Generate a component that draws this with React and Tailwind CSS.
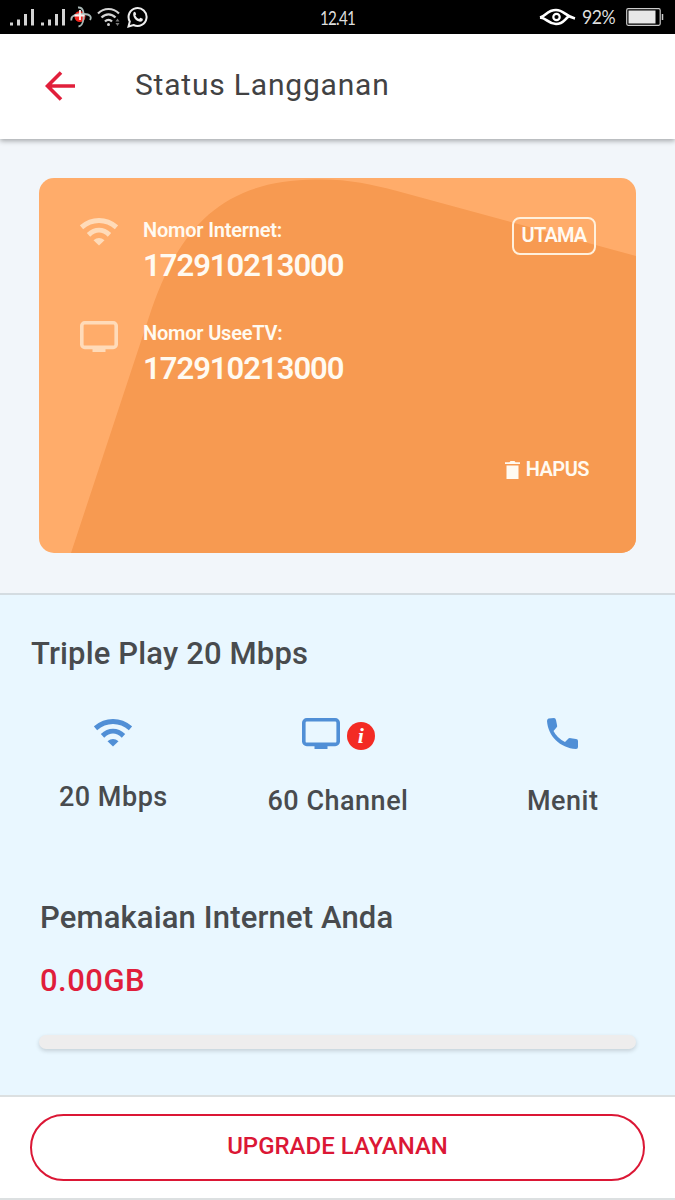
import React from 'react';

const nomor = [
  { label: 'Nomor Internet:', nilai: '172910213000', icono: 'wifi' },
  { label: 'Nomor UseeTV:', nilai: '172910213000', icono: 'tv' },
];

const Wifi = ({ className }) => (
  <svg viewBox="0 0 38 28" className={className} fill="none">
    <path d="M1.500 9.300C12 .3 26 .3 36.500 9.300" stroke="currentColor" strokeWidth="5" />
    <path d="M8.500 16.800C15 10.800 23 10.800 29.500 16.800" stroke="currentColor" strokeWidth="5" />
    <path d="M13.500 22.200Q19 17.600 24.500 22.200L19 27.500Z" fill="currentColor" />
  </svg>
);

const Tv = ({ className }) => (
  <svg viewBox="0 0 38 31" className={className} fill="none">
    <rect x="1.800" y="1.800" width="34.400" height="24.600" rx="3" stroke="currentColor" strokeWidth="3.600" />
    <path d="M12.500 27h13v4h-13z" fill="currentColor" />
  </svg>
);

const Sinyal = () => (
  <svg viewBox="0 0 25 18" className="h-[18px] w-[25px]" fill="#d4d4d4">
    <path d="M0 14.500h3V17.500H0zM7 11.500h3v6H7zM14 6h3v11.500h-3zM21 1h3v16.500h-3z" />
  </svg>
);

const StatusBar = () => (
  <div className="grid h-[34px] grid-cols-3 items-center bg-black text-[#dedede]">
    <div className="flex items-center pl-[10px]">
      <Sinyal />
      <div className="ml-[6px]"><Sinyal /></div>
      <svg viewBox="0 0 22 22" className="ml-[4px] h-[22px] w-[22px]" fill="none">
        <circle cx="10" cy="10.500" r="5.500" fill="#f0271f" />
        <path d="M1.500 14.500C0 9 8 8 14 8c6 0 8 3 6 6" stroke="#a9b8b6" strokeWidth="1.800" />
        <path d="M8 1.500C14 1 14 8 13.500 13c-.500 4-2 7-5 7.500" stroke="#a9b8b6" strokeWidth="1.800" />
        <path d="M10 4v10M4.500 9.500h10" stroke="#fff0ee" strokeWidth="1.800" />
      </svg>
      <svg viewBox="0 0 24 20" className="ml-[5px] h-[20px] w-[24px]" fill="none" stroke="#d4d4d4" strokeWidth="2.200">
        <path d="M1 6.500C7 .500 16 .500 22 6.500M4.500 10.500c4-4.300 10-4.300 14 0M8 14.500c2-2.300 5-2.300 7 0" />
        <circle cx="11.500" cy="17.500" r="1.500" fill="#d4d4d4" stroke="none" />
        <path d="M18.500 14.500l2-3 2 3zM18.500 16l2 3 2-3z" fill="#777" stroke="none" />
      </svg>
      <svg viewBox="0 0 22 22" className="ml-[6px] h-[22px] w-[22px]" fill="none">
        <path d="M2.800 15.500A9 9 0 1 1 6.500 19L1.500 20.500z" stroke="#eee" strokeWidth="2" />
        <path d="M6.500 6.500q1.200-1.300 2 0l.700 1.800-.900 1.300q1.200 2.500 3.800 3.500l1.300-1.300 2.300 1q.800 2.700-2.700 2.900C9 15.300 5 10.500 6.500 6.500z" fill="#eee" />
      </svg>
    </div>
    <div className="scale-x-[0.8] text-center font-['Lato'] text-[19px] leading-none tracking-[-1px]">12.41</div>
    <div className="flex items-center justify-end pr-[11px]">
      <svg viewBox="0 0 37 18" className="h-[18px] w-[37px]" fill="none" stroke="#fff">
        <path d="M1 9.500C7 8 8 2 17 2c8 0 9 6 19 8.500" strokeWidth="2.600" />
        <path d="M1 9.500c7 .500 8 6.500 16 6.500 7 0 8-4 12.500-7.500" strokeWidth="2.600" />
        <circle cx="17.500" cy="9" r="3.200" strokeWidth="2.200" />
      </svg>
      <span className="ml-[6px] w-[34px] origin-left scale-x-[0.93] pb-[2px] font-['Lato'] text-[19px] leading-none tracking-[-0.5px] whitespace-nowrap">92%</span>
      <svg viewBox="0 0 38 18" className="ml-[10px] h-[18px] w-[38px]" fill="none">
        <rect x=".700" y=".700" width="33.500" height="16.600" rx="1.500" stroke="#ccc" strokeWidth="1.200" />
        <path d="M2.500 2.500h27v13h-27z" fill="#e8e8e8" />
        <path d="M36.500 6v6" stroke="#ccc" strokeWidth="1.500" />
      </svg>
    </div>
  </div>
);

const Header = () => (
  <header className="relative flex h-[105px] items-center bg-white pb-[4px] pl-[45px] shadow-[0_2px_5px_rgba(0,0,0,0.32)]">
    <svg viewBox="0 0 31 30" className="mt-[3px] h-[30px] w-[31px]" fill="none" stroke="#e11f3b" strokeWidth="3.600">
      <path d="M30 15H3M16 1.500L2.500 15 16 28.500" />
    </svg>
    <h1 className="ml-[59px] text-[30px] leading-none tracking-[0.8px] whitespace-nowrap text-[#424243]">Status Langganan</h1>
  </header>
);

const Kartu = () => (
  <div className="relative h-[375px] overflow-hidden rounded-[15px] bg-[#ffac6a] text-[#fffaf1]">
    <svg viewBox="0 0 597 375" className="absolute inset-0 h-full w-full" fill="#f79a51">
      <path d="M32 375L110 139C137 57 177 2 277 1.500C310 1 331 6 358 13L597 78V375Z" />
    </svg>
    <div className="relative flex h-full justify-between pr-[40px] pl-[41px]">
      <div className="flex flex-col gap-[35px] pt-[40px]">
        {nomor.map((n) => (
          <div key={n.label} className="flex h-[68px]">
            <div className="w-[63px] text-[#ffdbb9]">
              {n.icono === 'wifi' ? <Wifi className="h-[28px] w-[38px]" /> : <Tv className="h-[31px] w-[38px]" />}
            </div>
            <div className="whitespace-nowrap">
              <p className="text-[20px] leading-[25px] font-semibold tracking-[-0.2px]">{n.label}</p>
              <p className="text-[31px] leading-[46px] font-semibold tracking-[-1px]">{n.nilai}</p>
            </div>
          </div>
        ))}
      </div>
      <div className="flex flex-col items-end justify-between pt-[39px] pb-[72px]">
        <span className="flex h-[38px] w-[84px] justify-center rounded-[8px] border-2 border-[#fff0dc] text-[20px] leading-[33px] font-semibold tracking-[-0.8px]">UTAMA</span>
        <button className="mr-[7px] flex items-center gap-[6px] text-[20px] leading-[24px] font-semibold tracking-[-0.5px]">
          <svg viewBox="0 0 15 18" className="mt-[2px] h-[18px] w-[15px]" fill="currentColor">
            <path d="M0 1.200h4.500L5.500 0h4l1 1.200H15V3H0zM1.500 4.500h12V18h-12z" />
          </svg>
          HAPUS
        </button>
      </div>
    </div>
  </div>
);

const Paket = () => (
  <section className="h-[502px] border-t-2 border-[#d4dce1] bg-[#e9f7ff] text-[#484b4e]">
    <h2 className="pt-[38px] pl-[31px] text-[31px] leading-[41px] font-medium tracking-[0.15px]">Triple Play 20 Mbps</h2>
    <div className="mt-[44px] grid h-[100px] grid-cols-3 pl-px text-[27px] leading-[32px] font-medium tracking-[0.5px]">
      <div className="flex flex-col items-center">
        <Wifi className="mt-px h-[28px] w-[38px] text-[#508fd6]" />
        <p className="mt-[34px]">20 Mbps</p>
      </div>
      <div className="flex flex-col items-center">
        <div className="flex items-end gap-[7px] pl-px">
          <Tv className="mb-[1px] h-[31px] w-[38px] text-[#508fd6]" />
          <svg viewBox="0 0 28 28" className="h-[28px] w-[28px]">
            <circle cx="14" cy="14" r="14" fill="#f32b24" />
            <text x="14" y="21" textAnchor="middle" fill="#fff" fontFamily="Liberation Serif, serif" fontSize="22" fontWeight="700" fontStyle="italic">i</text>
          </svg>
        </div>
        <p className="mt-[35px]">60 Channel</p>
      </div>
      <div className="flex flex-col items-center">
        <svg viewBox="0 0 31 31" className="h-[31px] w-[31px]" fill="#508fd6">
          <path d="M1.500.500Q0 1 0 3C1 18 13 30 29 31q2 0 2-2v-6q0-2-2-2l-5-.800q-2-.500-3 .800l-3 3Q10 20 6.500 13l3-3.500q1-.800.600-2L9 2Q8.500 0 7 0z" />
        </svg>
        <p className="mt-[36px]">Menit</p>
      </div>
    </div>
    <div className="mx-[39px] mt-[79px]">
      <h2 className="pl-px text-[31px] leading-[41px] font-medium tracking-[0.15px]">Pemakaian Internet Anda</h2>
      <p className="mt-[22px] pl-px text-[31px] leading-[41px] font-medium tracking-[0.5px] text-[#e01e3c]">0.00GB</p>
      <div className="mt-[34px] h-[14px] rounded-[7px] bg-[#eeeded] shadow-[0_2px_4px_rgba(0,0,0,0.16)]" />
    </div>
  </section>
);

export default function App() {
  return (
    <div className="flex h-[1200px] w-[675px] flex-col overflow-hidden bg-[#f2f6fa] font-['Roboto',sans-serif]">
      <StatusBar />
      <Header />
      <div className="h-[454px] px-[39px] pt-[39px]">
        <Kartu />
      </div>
      <Paket />
      <footer className="h-[105px] border-y-2 border-[#dce0e1] bg-white px-[30px] pt-[17px]">
        <button className="h-[67px] w-full rounded-full border-2 border-[#db1735] pb-[4px] text-[24px] leading-none font-medium text-[#db1735]">
          UPGRADE LAYANAN
        </button>
      </footer>
    </div>
  );
}
